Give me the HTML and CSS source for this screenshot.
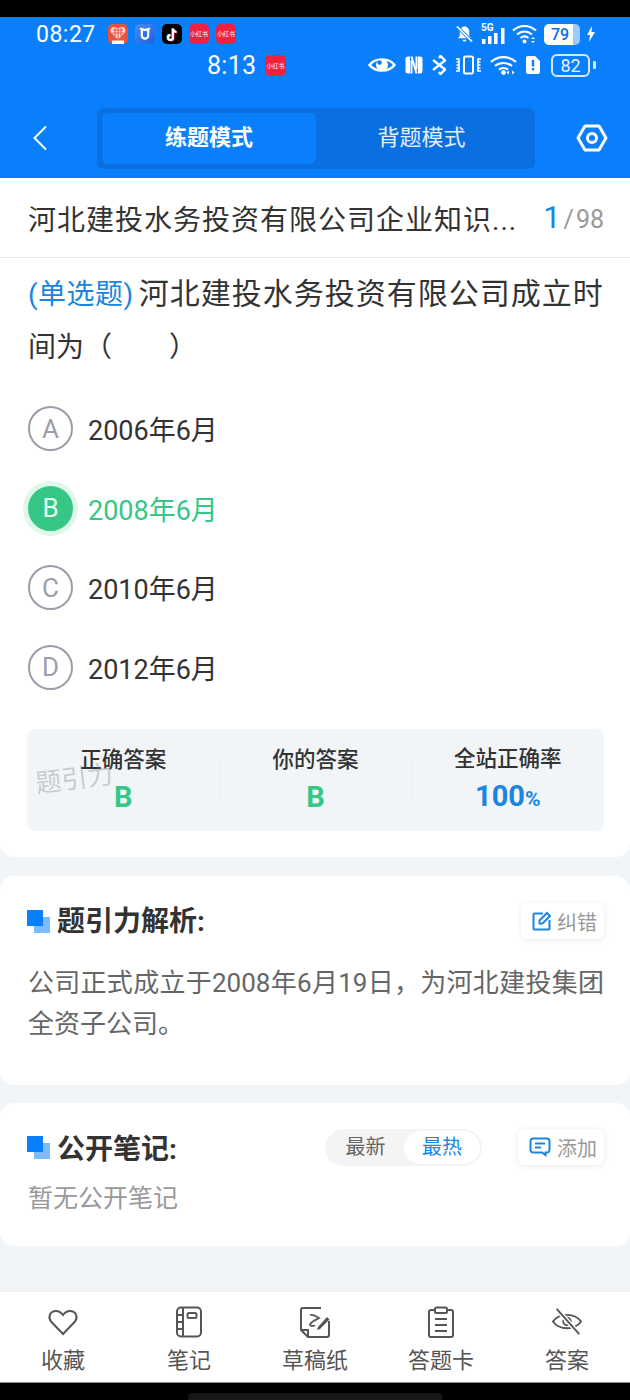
FILE: index.html
```html
<!DOCTYPE html>
<html lang="zh-CN">
<head>
    <meta charset="UTF-8">
    <meta name="viewport" content="width=device-width, initial-scale=1.0">
    <title>练题模式</title>
    <link rel="stylesheet" href="styles.css">
</head>
<body>
    <div class="black-top"></div>

    <header class="header">
        <div class="status-one">
            <span class="clock-one">08:27</span>
            <span class="app-icon app-pdd"><svg viewBox="0 0 20 20"><path d="M10 15.500 3.500 9C1.500 6.500 3 3 6 3c2 0 3 1 4 2 1-1 2-2 4-2 3 0 4.500 3.500 2.500 6z" fill="#f9d9d0"/><path d="M5 6h10M4.500 9h11M7 3.500v9M10 5v10M13 3.500v9" stroke="#e8533f" stroke-width="1"/><rect x="4" y="16.500" width="12" height="3.500" fill="#fff"/></svg></span>
            <span class="app-icon app-shield"><svg viewBox="0 0 20 20"><path d="M5.500 4c.5 1.200 1.500 1.800 4.500 1.800S14 5.200 14.500 4M6.800 6v5.500a3.200 3.200 0 0 0 6.400 0V6" fill="none" stroke="#fff" stroke-width="2.200"/></svg></span>
            <span class="app-icon app-tiktok"><svg viewBox="0 0 20 20"><path d="M10.400 4.300v9a2.500 2.500 0 1 1-2.500-2.500M10.400 4.300c.3 2 1.500 3.200 3.500 3.500" fill="none" stroke="#25f4ee" stroke-width="2"/><path d="M11.600 5v9a2.500 2.500 0 1 1-2.500-2.500M11.600 5c.3 2 1.500 3.200 3.500 3.500" fill="none" stroke="#fe2c55" stroke-width="2"/><path d="M11 4.600v9a2.500 2.500 0 1 1-2.500-2.500M11 4.600c.3 2 1.500 3.200 3.500 3.500" fill="none" stroke="#fff" stroke-width="2"/></svg></span>
            <span class="app-icon app-red">小红书</span>
            <span class="app-icon app-red">小红书</span>
            <span class="status-right-one">
                <svg class="ic-bell" viewBox="0 0 20 20"><path d="M10 2c-3 0-5 2.500-5 5v5l-2 2.500h14L15 12V7c0-2.500-2-5-5-5zM8 16h4a2 2 0 0 1-4 0z" fill="#fff"/><path d="M2 2 18 18" stroke="#0a7ffb" stroke-width="3.500"/><path d="M2 2 18 18" stroke="#fff" stroke-width="1.600"/></svg>
                <svg class="ic-signal" viewBox="0 0 25 22"><text x="0" y="8" class="five-g">5G</text><rect x="1" y="16" width="3.500" height="5" fill="#fff"/><rect x="7" y="13" width="3.500" height="8" fill="#fff"/><rect x="13" y="10" width="3.500" height="11" fill="#fff"/><rect x="20" y="5" width="3.500" height="16" fill="#fff"/></svg>
                <svg class="ic-wifi" viewBox="0 0 25 20"><path d="M1 6.500C8 .5 17 .5 24 6.500M5 10.500c4.500-4 10.500-4 15 0M8.500 14c2.500-2 5.500-2 8 0" fill="none" stroke="#fff" stroke-width="2.200"/><circle cx="12.500" cy="17.500" r="2" fill="#fff"/><path d="m19 15 2-2 2 2zm0 2 2 2 2-2z" fill="#fff"/></svg>
                <span class="batt-one"><span class="batt-one-num">79</span></span>
                <svg class="ic-bolt" viewBox="0 0 8 16"><path d="M5 0 0 9h3l-1 7 6-10H4.500z" fill="#fff"/></svg>
            </span>
        </div>

        <div class="status-two">
            <span class="clock-two">8:13</span>
            <span class="app-icon app-red app-big">小红书</span>
            <span class="status-right-two">
                <svg class="ic-eye" viewBox="0 0 28 18"><path d="M1.500 9C7 1.500 21 1.500 26.500 9 21 16.500 7 16.500 1.500 9z" fill="none" stroke="#fff" stroke-width="2.400"/><circle cx="14" cy="9" r="6" fill="#fff"/><circle cx="11.500" cy="6.500" r="2.300" fill="#0a7ffb"/></svg>
                <svg class="ic-nfc" viewBox="0 0 20 20"><path d="M6 1.500H4A2.500 2.500 0 0 0 1.500 4v12A2.500 2.500 0 0 0 4 18.500h2zM14 18.500h2a2.500 2.500 0 0 0 2.500-2.500V4A2.500 2.500 0 0 0 16 1.500h-2z" fill="#fff"/><path d="M7.500 1.500 12.500 18.500M12.500 1.500v13M7.500 5.500v13" fill="none" stroke="#fff" stroke-width="2"/></svg>
                <svg class="ic-bt" viewBox="0 0 14 20"><path d="M1 5 13 14.500 8.500 19 7 17M1 15 13 5.500 8.500 1 7 3" fill="none" stroke="#fff" stroke-width="2.400"/></svg>
                <svg class="ic-vibrate" viewBox="0 0 27 20"><rect x="9" y="1.500" width="9" height="17" rx="1.500" fill="none" stroke="#fff" stroke-width="2"/><path d="M1 4h3v3H1.500M4 7v3H1.500M4 10v3H1.500M4 13v3H1" fill="none" stroke="#fff" stroke-width="1.600"/><path d="M26 4h-3v3h2.500M23 7v3h2.500M23 10v3h2.500M23 13v3h3" fill="none" stroke="#fff" stroke-width="1.600"/></svg>
                <svg class="ic-wifi-two" viewBox="0 0 27 20"><path d="M1 7C8 .5 19 .5 26 7M5 11c5-4 12-4 17 0M9 14.500c3-2 6-2 9 0" fill="none" stroke="#fff" stroke-width="2.200"/><circle cx="13.500" cy="17.500" r="2.400" fill="#fff"/><path d="m19 15.500-2.500 2 2.500 2zm3 0 2.500 2-2.500 2z" fill="#fff"/></svg>
                <svg class="ic-sim" viewBox="0 0 16 20"><path d="M3 1h7l5 5v11a2 2 0 0 1-2 2H3a2 2 0 0 1-2-2V3a2 2 0 0 1 2-2z" fill="#fff"/><rect x="6.800" y="5" width="2.400" height="6.500" fill="#0a7ffb"/><rect x="6.800" y="13" width="2.400" height="2.400" fill="#0a7ffb"/></svg>
                <span class="batt-two">82</span><span class="batt-two-tip"></span>
            </span>
        </div>

        <nav class="nav-row">
            <svg class="ic-back" viewBox="0 0 16 26"><path d="M14 1.500 2.500 13 14 24.500" fill="none" stroke="#fff" stroke-width="2"/></svg>
            <div class="mode-switch">
                <div class="mode-item mode-active">练题模式</div>
                <div class="mode-item">背题模式</div>
            </div>
            <svg class="ic-settings" viewBox="0 0 32 28"><path d="M9 2h14l7 12-7 12H9L2 14z" fill="none" stroke="#fff" stroke-width="3" stroke-linejoin="round"/><circle cx="16" cy="14" r="4.500" fill="none" stroke="#fff" stroke-width="3"/></svg>
        </nav>
    </header>

    <main class="content">
        <section class="card card-question">
            <div class="title-row">
                <div class="paper-title">河北建投水务投资有限公司企业知识...</div>
                <div class="counter"><span class="counter-now">1</span><span class="counter-sep">/</span>98</div>
            </div>
            <div class="question">
                <div class="q-first"><span class="q-type">(单选题)</span>河北建投水务投资有限公司成立时</div>
                <div>间为（&emsp;&emsp;）</div>
            </div>

            <div class="options">
                <div class="option"><span class="letter">A</span><span>2006年6月</span></div>
                <div class="option option-right"><span class="letter">B</span><span>2008年6月</span></div>
                <div class="option"><span class="letter">C</span><span>2010年6月</span></div>
                <div class="option"><span class="letter">D</span><span>2012年6月</span></div>
            </div>

            <div class="stats">
                <div class="stat"><div class="stat-label">正确答案</div><div class="stat-value green">B</div></div>
                <div class="stat stat-line"><div class="stat-label">你的答案</div><div class="stat-value green">B</div></div>
                <div class="stat stat-line"><div class="stat-label">全站正确率</div><div class="stat-value blue">100<small>%</small></div></div>
                <span class="watermark">题引力</span>
            </div>
        </section>

        <section class="card card-analysis">
            <div class="section-head">
                <span class="mark"></span>
                <h2>题引力解析:</h2>
                <button class="small-btn btn-right">
                    <svg class="ic-edit" viewBox="0 0 20 20"><path d="M11 2.500H2.500a1 1 0 0 0-1 1v14a1 1 0 0 0 1 1h14a1 1 0 0 0 1-1V9" fill="none" stroke="#1a86e0" stroke-width="2"/><path d="M7.500 12.500V9.500L15 2l3 3-7.500 7.500z" fill="none" stroke="#1a86e0" stroke-width="2"/></svg>
                    纠错
                </button>
            </div>
            <p class="analysis-text">公司正式成立于2008年6月19日，为河北建投集团全资子公司。</p>
        </section>

        <section class="card card-notes">
            <div class="section-head">
                <span class="mark"></span>
                <h2>公开笔记:</h2>
                <div class="sort-switch">
                    <span class="sort-item">最新</span>
                    <span class="sort-item sort-active">最热</span>
                </div>
                <button class="small-btn">
                    <svg class="ic-comment" viewBox="0 0 22 20"><path d="M4 1.500h14a2.500 2.500 0 0 1 2.500 2.500v9a2.500 2.500 0 0 1-2.500 2.500h-1.500V18l-3.500-2.500H4A2.500 2.500 0 0 1 1.500 13V4A2.500 2.500 0 0 1 4 1.500z" fill="none" stroke="#1a86e0" stroke-width="2"/><path d="M6 6.500h10M6 10.500h6" stroke="#1a86e0" stroke-width="2"/></svg>
                    添加
                </button>
            </div>
            <p class="no-notes">暂无公开笔记</p>
        </section>
    </main>

    <footer class="tabbar">
        <div class="tab">
            <svg viewBox="0 0 32 32"><path d="M16 28 4 15.500C1 12 2.500 5 9 5c3.500 0 5.500 2 7 4 1.500-2 3.500-4 7-4 6.500 0 8 7 5 10.500z" fill="none" stroke="#555" stroke-width="2"/></svg>
            <span>收藏</span>
        </div>
        <div class="tab">
            <svg viewBox="0 0 32 32"><rect x="4" y="1.500" width="24" height="29" rx="4" fill="none" stroke="#555" stroke-width="2"/><path d="M10 2v28M4 9h6M4 16h6M4 23h6" stroke="#555" stroke-width="2"/><rect x="14.500" y="7" width="9" height="5" rx="1.500" fill="none" stroke="#555" stroke-width="2"/></svg>
            <span>笔记</span>
        </div>
        <div class="tab">
            <svg viewBox="0 0 32 32"><path d="M22 2H4a2 2 0 0 0-2 2v20l7 7h19a2 2 0 0 0 2-2V15M2 24h7v7" fill="none" stroke="#555" stroke-width="2"/><path d="M11 9c3-1 6 1 9 3-3 2-9 4-9 7 1 2 4 0 5 1" fill="none" stroke="#555" stroke-width="1.800"/><path d="m19 21 9-10 2.500 2.500-9.500 9.500-3 1z" fill="#555"/></svg>
            <span>草稿纸</span>
        </div>
        <div class="tab">
            <svg viewBox="0 0 32 32"><path d="M9 4H6a2 2 0 0 0-2 2v23a2 2 0 0 0 2 2h20a2 2 0 0 0 2-2V6a2 2 0 0 0-2-2h-3" fill="none" stroke="#555" stroke-width="2"/><rect x="10" y="1.500" width="12" height="5.500" rx="1.500" fill="none" stroke="#555" stroke-width="2"/><path d="M10 13h12M10 19h12M10 25h12" stroke="#555" stroke-width="2"/></svg>
            <span>答题卡</span>
        </div>
        <div class="tab">
            <svg viewBox="0 0 34 32"><path d="M2 15.500C9 6 25 6 32 15.500 25 25 9 25 2 15.500z" fill="none" stroke="#555" stroke-width="2"/><circle cx="17" cy="15.500" r="4" fill="none" stroke="#555" stroke-width="2"/><path d="M6 2l24 27" stroke="#fff" stroke-width="5"/><path d="M6 2l24 27" stroke="#555" stroke-width="2"/></svg>
            <span>答案</span>
        </div>
    </footer>

    <div class="black-bottom"><div class="home-bar"></div></div>
</body>
</html>
```

FILE: styles.css
```css
* {
    box-sizing: border-box;
}

html, body {
    margin: 0;
    padding: 0;
}

body {
    width: 630px;
    height: 1400px;
    display: flex;
    flex-direction: column;
    overflow: hidden;
    background-color: #f2f5f8;
    font-family: Roboto, "Noto Sans CJK SC", sans-serif;
    color: #333;
}

svg {
    display: block;
    flex: none;
}

.black-top {
    height: 17px;
    background-color: #000;
}

/* header + status bars */
.header {
    height: 161px;
    padding-top: 1px;
    background-color: #0a7ffb;
    color: #fff;
}

.status-one {
    height: 32px;
    display: flex;
    align-items: center;
    padding-left: 36px;
    padding-right: 35px;
}

.clock-one {
    font-size: 23px;
    width: 72px;
    letter-spacing: 0.5px;
}

.app-icon {
    width: 20px;
    height: 20px;
    border-radius: 5px;
    margin-left: 7px;
    flex: none;
    overflow: hidden;
}

.clock-one + .app-icon {
    margin-left: 0;
}

.app-pdd { background-color: #e8533f; }
.app-shield { background: linear-gradient(135deg, #4a8cf0, #1f5fe0); }
.app-tiktok { background-color: #000; }

.app-red {
    background-color: #f0213f;
    color: #fff;
    font-size: 6px;
    line-height: 20px;
    text-align: center;
    white-space: nowrap;
}

.status-right-one {
    margin-left: auto;
    display: flex;
    align-items: center;
}

.ic-bell { width: 19px; height: 20px; margin-right: 7px; }
.ic-signal { width: 25px; height: 22px; margin-right: 6px; }
.ic-wifi { width: 25px; height: 20px; margin-right: 7px; }
.ic-bolt { width: 8px; height: 16px; margin-left: 7px; }

.five-g {
    font-size: 10px;
    font-weight: 700;
    fill: #fff;
}

.batt-one {
    width: 36px;
    height: 21px;
    border-radius: 5px;
    background: linear-gradient(to right, #fff 0, #fff 80%, #9cccff 80%);
    display: flex;
    align-items: center;
    padding-left: 7px;
}

.batt-one-num {
    color: #0a6fe0;
    font-size: 16px;
    font-weight: 500;
}

.status-two {
    height: 30px;
    display: flex;
    align-items: center;
    padding-left: 207px;
    padding-right: 34px;
}

.clock-two {
    font-size: 25px;
    width: 58px;
    letter-spacing: 0.3px;
}

.app-big {
    width: 21px;
    height: 21px;
    margin-left: 0;
    line-height: 21px;
}

.status-right-two {
    margin-left: auto;
    display: flex;
    align-items: center;
}

.ic-eye { width: 28px; height: 18px; margin-right: 8px; }
.ic-nfc { width: 20px; height: 20px; margin-right: 8px; }
.ic-bt { width: 14px; height: 20px; margin-right: 9px; }
.ic-vibrate { width: 27px; height: 20px; margin-right: 8px; }
.ic-wifi-two { width: 27px; height: 20px; margin-right: 8px; }
.ic-sim { width: 16px; height: 20px; margin-right: 10px; }

.batt-two {
    width: 39px;
    height: 23px;
    border: 2px solid #d4e8ff;
    border-radius: 6px;
    font-size: 18px;
    line-height: 19px;
    text-align: center;
    color: #e6f2ff;
}

.batt-two-tip {
    width: 3px;
    height: 8px;
    margin-left: 3px;
    border-radius: 1px;
    background-color: #d4e8ff;
}

.nav-row {
    height: 62px;
    margin-top: 27px;
    display: flex;
    align-items: center;
    padding-left: 32px;
}

.ic-back {
    width: 16px;
    height: 26px;
}

.mode-switch {
    width: 438px;
    height: 61px;
    margin-left: 49px;
    padding: 5px;
    display: flex;
    border-radius: 7px;
    background-color: #0a6fe0;
}

.mode-item {
    flex: 1;
    border-radius: 6px;
    text-align: center;
    font-size: 22px;
    line-height: 50px;
    color: #e3effc;
}

.mode-active {
    flex: none;
    width: 214px;
    margin-right: -3px;
    background-color: #0a7ffb;
    color: #fff;
    font-weight: 700;
}

.ic-settings {
    width: 32px;
    height: 28px;
    margin-left: 41px;
}

/* cards */
.content {
    flex: 1;
    display: flex;
    flex-direction: column;
}

.card {
    background-color: #fff;
    border-radius: 14px;
}

.card-question {
    height: 679px;
    border-top-left-radius: 0;
    border-top-right-radius: 0;
}

.title-row {
    height: 80px;
    display: flex;
    align-items: center;
    padding: 0 26px 0 28px;
    border-bottom: 1px solid #e4e6e9;
}

.paper-title {
    font-size: 28px;
    letter-spacing: 1px;
    white-space: nowrap;
    color: #333;
}

.counter {
    margin-left: auto;
    font-size: 25px;
    color: #999;
    white-space: nowrap;
}

.counter-now {
    font-size: 31px;
    color: #1a86e0;
    margin-right: 3px;
}

.counter-sep {
    margin-right: 2px;
}

.question {
    padding: 9px 25px 0 28px;
    font-size: 28px;
    line-height: 53px;
    color: #333;
}

.q-first {
    font-size: 30px;
    letter-spacing: 1px;
    white-space: nowrap;
}

.q-type {
    margin-right: 5px;
    font-size: 28px;
    letter-spacing: 0.5px;
    color: #1a86e0;
}

.options {
    margin-top: 15px;
    padding-left: 28px;
}

.option {
    height: 79.500px;
    display: flex;
    align-items: center;
    font-size: 27px;
    color: #333;
}

.letter {
    width: 45px;
    height: 45px;
    margin-right: 15px;
    border: 2px solid #9c9cab;
    border-radius: 50%;
    display: flex;
    align-items: center;
    justify-content: center;
    font-size: 26px;
    color: #9c9cab;
}

.option-right {
    color: #36c786;
}

.option-right .letter {
    border-color: #36c786;
    background-color: #36c786;
    color: #e8fff3;
    box-shadow: 0 0 0 5px #e0f7eb;
}

.stats {
    position: relative;
    height: 102px;
    margin: 22px 26px 0 27px;
    padding-top: 2px;
    border-radius: 8px;
    background-color: #f2f5f8;
    display: flex;
    align-items: center;
}

.stat {
    flex: 1;
    text-align: center;
}

.stat-line {
    background: linear-gradient(#eaedf0, #eaedf0) left center / 1px 36px no-repeat;
}

.stat-label {
    font-size: 21.500px;
    font-weight: 500;
    line-height: 30px;
    color: #333;
}

.stat-value {
    margin-top: 2px;
    font-size: 29px;
    font-weight: 700;
    line-height: 40px;
}

.stat-value small {
    font-size: 21px;
}

.green { color: #36c786; }
.blue { color: #1a86e0; }

/* the faint diagonal watermark sits on top of the stats */
.watermark {
    position: absolute;
    left: 8px;
    top: 29px;
    font-size: 26px;
    color: rgba(120, 120, 120, 0.35);
    transform: rotate(-7deg);
}

.card-analysis {
    height: 209px;
    margin-top: 19px;
    padding: 27px 26px 0 27px;
}

.card-notes {
    height: 143px;
    margin-top: 18px;
    padding: 26px 26px 0 27px;
}

.section-head {
    display: flex;
    align-items: center;
    height: 36px;
}

.section-head h2 {
    margin: 0 0 0 7px;
    padding-bottom: 5px;
    font-size: 28px;
    font-weight: 700;
    color: #333;
    white-space: nowrap;
}

.card-notes .section-head h2 {
    padding-bottom: 1px;
}

/* solid square over a lighter one */
.mark {
    width: 23px;
    height: 23px;
    flex: none;
    background:
        linear-gradient(#0a7ffb, #0a7ffb) left top / 16px 16px no-repeat,
        linear-gradient(#7dbcfc, #7dbcfc) right bottom / 16px 16px no-repeat;
}

.small-btn {
    display: flex;
    align-items: center;
    height: 36px;
    margin-left: 36px;
    padding: 0 7px 0 11px;
    border: none;
    border-radius: 6px;
    background-color: #fff;
    box-shadow: 0 1px 6px rgba(0, 0, 0, 0.09);
    font-family: inherit;
    font-size: 20px;
    color: #999;
    white-space: nowrap;
}

.btn-right {
    margin-left: auto;
}

.ic-edit {
    width: 20px;
    height: 20px;
    margin-right: 5px;
}

.ic-comment {
    width: 22px;
    height: 20px;
    margin-right: 6px;
}

.analysis-text {
    margin: 24px 0 0 1px;
    font-size: 26px;
    line-height: 41px;
    text-align: justify;
    color: #666;
}

.sort-switch {
    margin-left: auto;
    width: 157px;
    height: 37px;
    padding: 2px;
    display: flex;
    align-items: center;
    border-radius: 19px;
    background-color: #f4f4f4;
}

.sort-item {
    flex: 1;
    text-align: center;
    font-size: 20px;
    line-height: 33px;
    color: #666;
}

.sort-active {
    flex: none;
    width: 76px;
    border-radius: 17px;
    background-color: #fff;
    color: #1a86e0;
}

.no-notes {
    margin: 16px 0 0 1px;
    font-size: 25px;
    line-height: 36px;
    color: #999;
}

/* bottom tabs */
.tabbar {
    height: 92px;
    flex: none;
    padding-top: 14px;
    display: flex;
    background-color: #fff;
    border-top: 1px solid #edf0f2;
    border-bottom: 1px solid #8a8a8a;
}

.tab {
    flex: 1;
    display: flex;
    flex-direction: column;
    align-items: center;
}

.tab svg {
    width: 32px;
    height: 32px;
}

.tab span {
    margin-top: 8px;
    font-size: 22px;
    line-height: 30px;
    color: #555;
}

.black-bottom {
    height: 17px;
    flex: none;
    background-color: #000;
    position: relative;
}

.home-bar {
    position: absolute;
    left: 188px;
    top: 10px;
    width: 254px;
    height: 7px;
    border-radius: 4px 4px 0 0;
    background-color: #161616;
}
```
